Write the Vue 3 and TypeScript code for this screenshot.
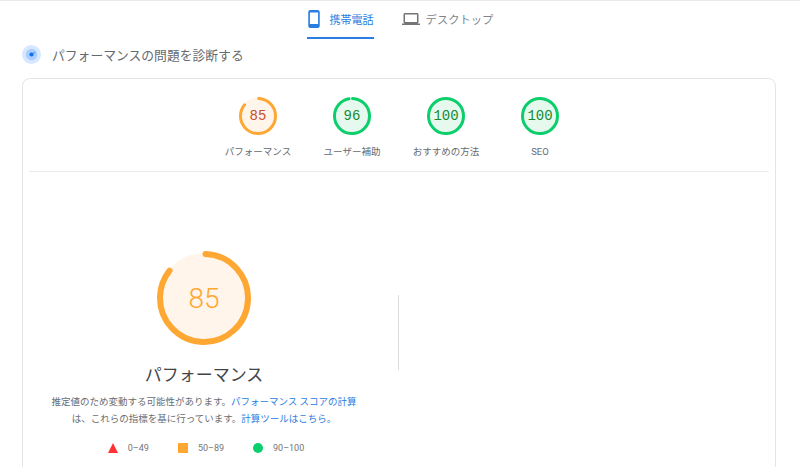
<template>
  <div class="page">
    <div class="tabs">
      <div class="tab active">
        <svg class="tab-icon" width="12" height="18" viewBox="5 1 14 22">
          <path fill="#2a7de1" d="M16.500 1h-9A2.500 2.500 0 0 0 5 3.500v17A2.500 2.500 0 0 0 7.500 23h9a2.500 2.500 0 0 0 2.500-2.500v-17A2.500 2.500 0 0 0 16.500 1zM17 18H7V4h10v14z" />
        </svg>
        <span>携帯電話</span>
      </div>
      <div class="tab desktop">
        <svg class="tab-icon" width="18" height="12" viewBox="0 4 24 16">
          <path fill="#757575" d="M20 18c1.100 0 2-.9 2-2V6c0-1.100-.9-2-2-2H4c-1.100 0-2 .9-2 2v10c0 1.100.9 2 2 2H0v2h24v-2h-4zM4 6h16v10H4V6z" />
        </svg>
        <span>デスクトップ</span>
      </div>
    </div>

    <div class="heading">
      <svg width="19" height="19" viewBox="0 0 20 20">
        <circle cx="10" cy="10" r="10" fill="#d6e8ff" />
        <circle cx="10" cy="10" r="6" fill="#a9cdfd" />
        <circle cx="10" cy="10" r="2.200" fill="#0b6ff0" />
        <path d="M10 10l3.500-2.500" stroke="#2a7de1" stroke-width="1" />
      </svg>
      <span>パフォーマンスの問題を診断する</span>
    </div>

    <div class="card">
      <div class="scores">
        <div v-for="s in scores" :key="s.label" class="score">
          <div class="gauge">
            <svg width="40" height="40" viewBox="0 0 40 40">
              <circle cx="20" cy="20" r="18.500" :fill="colors[s.tone].bg" />
              <circle
                cx="20"
                cy="20"
                r="17.500"
                fill="none"
                :stroke="colors[s.tone].ring"
                stroke-width="3"
                stroke-linecap="round"
                transform="rotate(-88 20 20)"
                :stroke-dasharray="dash(17.5, s.value)"
              />
            </svg>
            <span class="gauge-num" :style="{ color: colors[s.tone].text }">{{ s.value }}</span>
          </div>
          <div class="score-label">{{ s.label }}</div>
        </div>
      </div>

      <div class="detail">
        <div class="summary">
          <div class="gauge big">
            <svg width="96" height="96" viewBox="0 0 96 96">
              <circle cx="48" cy="48" r="45" fill="#fff5ea" />
              <circle
                cx="48"
                cy="48"
                r="44"
                fill="none"
                stroke="#ffa733"
                stroke-width="6"
                stroke-linecap="round"
                transform="rotate(-88 48 48)"
                :stroke-dasharray="dash(44, 85)"
              />
            </svg>
            <span class="big-num">85</span>
          </div>
          <div class="summary-title">パフォーマンス</div>
          <p class="summary-text">
            推定値のため変動する可能性があります。<a>パフォーマンス スコアの計算</a><br />は、これらの指標を基に行っています。<a>計算ツールはこちら。</a>
          </p>
          <div class="legend">
            <div class="legend-item">
              <svg width="10" height="10" viewBox="0 0 10 10"><path d="M5 0l5 10H0z" fill="#ff3333" /></svg>
              <span>0–49</span>
            </div>
            <div class="legend-item">
              <svg width="10" height="10" viewBox="0 0 10 10"><rect width="10" height="10" fill="#ffa733" /></svg>
              <span>50–89</span>
            </div>
            <div class="legend-item">
              <svg width="10" height="10" viewBox="0 0 10 10"><circle cx="5" cy="5" r="5" fill="#0cce6b" /></svg>
              <span>90–100</span>
            </div>
          </div>
        </div>
        <div class="split"></div>
      </div>
    </div>
  </div>
</template>

<script setup lang="ts">
type Tone = 'average' | 'pass'

const colors: Record<Tone, { ring: string; bg: string; text: string }> = {
  average: { ring: '#ffa733', bg: '#fff5ea', text: '#c9502a' },
  pass: { ring: '#0cce6b', bg: '#e6f9ef', text: '#178a2c' },
}

const scores: { label: string; value: number; tone: Tone }[] = [
  { label: 'パフォーマンス', value: 85, tone: 'average' },
  { label: 'ユーザー補助', value: 96, tone: 'pass' },
  { label: 'おすすめの方法', value: 100, tone: 'pass' },
  { label: 'SEO', value: 100, tone: 'pass' },
]

function dash(r: number, value: number): string {
  const c = 2 * Math.PI * r
  return `${(c * value) / 100} ${c}`
}
</script>

<style scoped>
.page {
  width: 800px;
  height: 467px;
  overflow: hidden;
  background: #fff;
  border-top: 1px solid #ebebeb;
  box-sizing: border-box;
  font-family: Roboto, "Noto Sans CJK JP", sans-serif;
  color: #5f6368;
}

.tabs {
  display: flex;
  justify-content: center;
  gap: 27px;
  height: 38px;
}

.tab {
  display: flex;
  align-items: center;
  gap: 10px;
  height: 36px;
  padding-left: 1px;
  font-size: 11px;
  color: #80868b;
  border-bottom: 2px solid transparent;
}

.tab.desktop {
  gap: 6px;
  font-size: 11.300px;
}

.tab.active {
  color: #2a7de1;
  border-bottom-color: #2a7de1;
}

.tab-icon {
  flex-shrink: 0;
}

.heading {
  display: flex;
  align-items: center;
  gap: 11px;
  margin: 5px 0 0 22px;
  height: 20px;
  font-size: 12.800px;
  color: #666a6e;
}

.card {
  box-sizing: border-box;
  width: 754px;
  margin: 14px 0 0 22px;
  height: 420px;
  padding: 0 6px;
  border: 1px solid #e3e5e8;
  border-radius: 8px;
}

.scores {
  display: flex;
  justify-content: center;
  padding-top: 17px;
  height: 75px;
  border-bottom: 1px solid #ebebeb;
}

.score {
  width: 94px;
  display: flex;
  flex-direction: column;
  align-items: center;
}

.gauge {
  position: relative;
  width: 40px;
  height: 40px;
}

.gauge svg {
  display: block;
}

.gauge-num {
  position: absolute;
  inset: 0;
  display: flex;
  align-items: center;
  justify-content: center;
  font-family: "Liberation Mono", monospace;
  font-size: 14px;
}

.score-label {
  margin-top: 9px;
  font-size: 9.500px;
  line-height: 14px;
  white-space: nowrap;
  color: #666a6e;
}

.detail {
  display: flex;
  align-items: flex-start;
}

.summary {
  width: 350px;
  display: flex;
  flex-direction: column;
  align-items: center;
  padding-top: 78px;
}

.gauge.big {
  width: 96px;
  height: 96px;
}

.big-num {
  position: absolute;
  inset: 0;
  display: flex;
  align-items: center;
  justify-content: center;
  font-size: 28px;
  font-weight: 300;
  color: #ffa733;
}

.summary-title {
  margin-top: 17px;
  font-size: 17px;
  line-height: 24px;
  color: #424548;
}

.summary-text {
  margin: 6px 0 0;
  font-size: 9.500px;
  line-height: 17px;
  text-align: center;
  white-space: nowrap;
  color: #6a6d70;
}

.summary-text a {
  color: #2a7de1;
}

.legend {
  display: flex;
  justify-content: center;
  gap: 29px;
  margin: 16px 0 0 4px;
}

.legend-item {
  display: flex;
  align-items: center;
  gap: 10px;
  font-size: 9px;
  color: #757575;
}

.split {
  width: 1px;
  height: 75px;
  margin: 123px 0 0 19px;
  background: #dadce0;
}
</style>
